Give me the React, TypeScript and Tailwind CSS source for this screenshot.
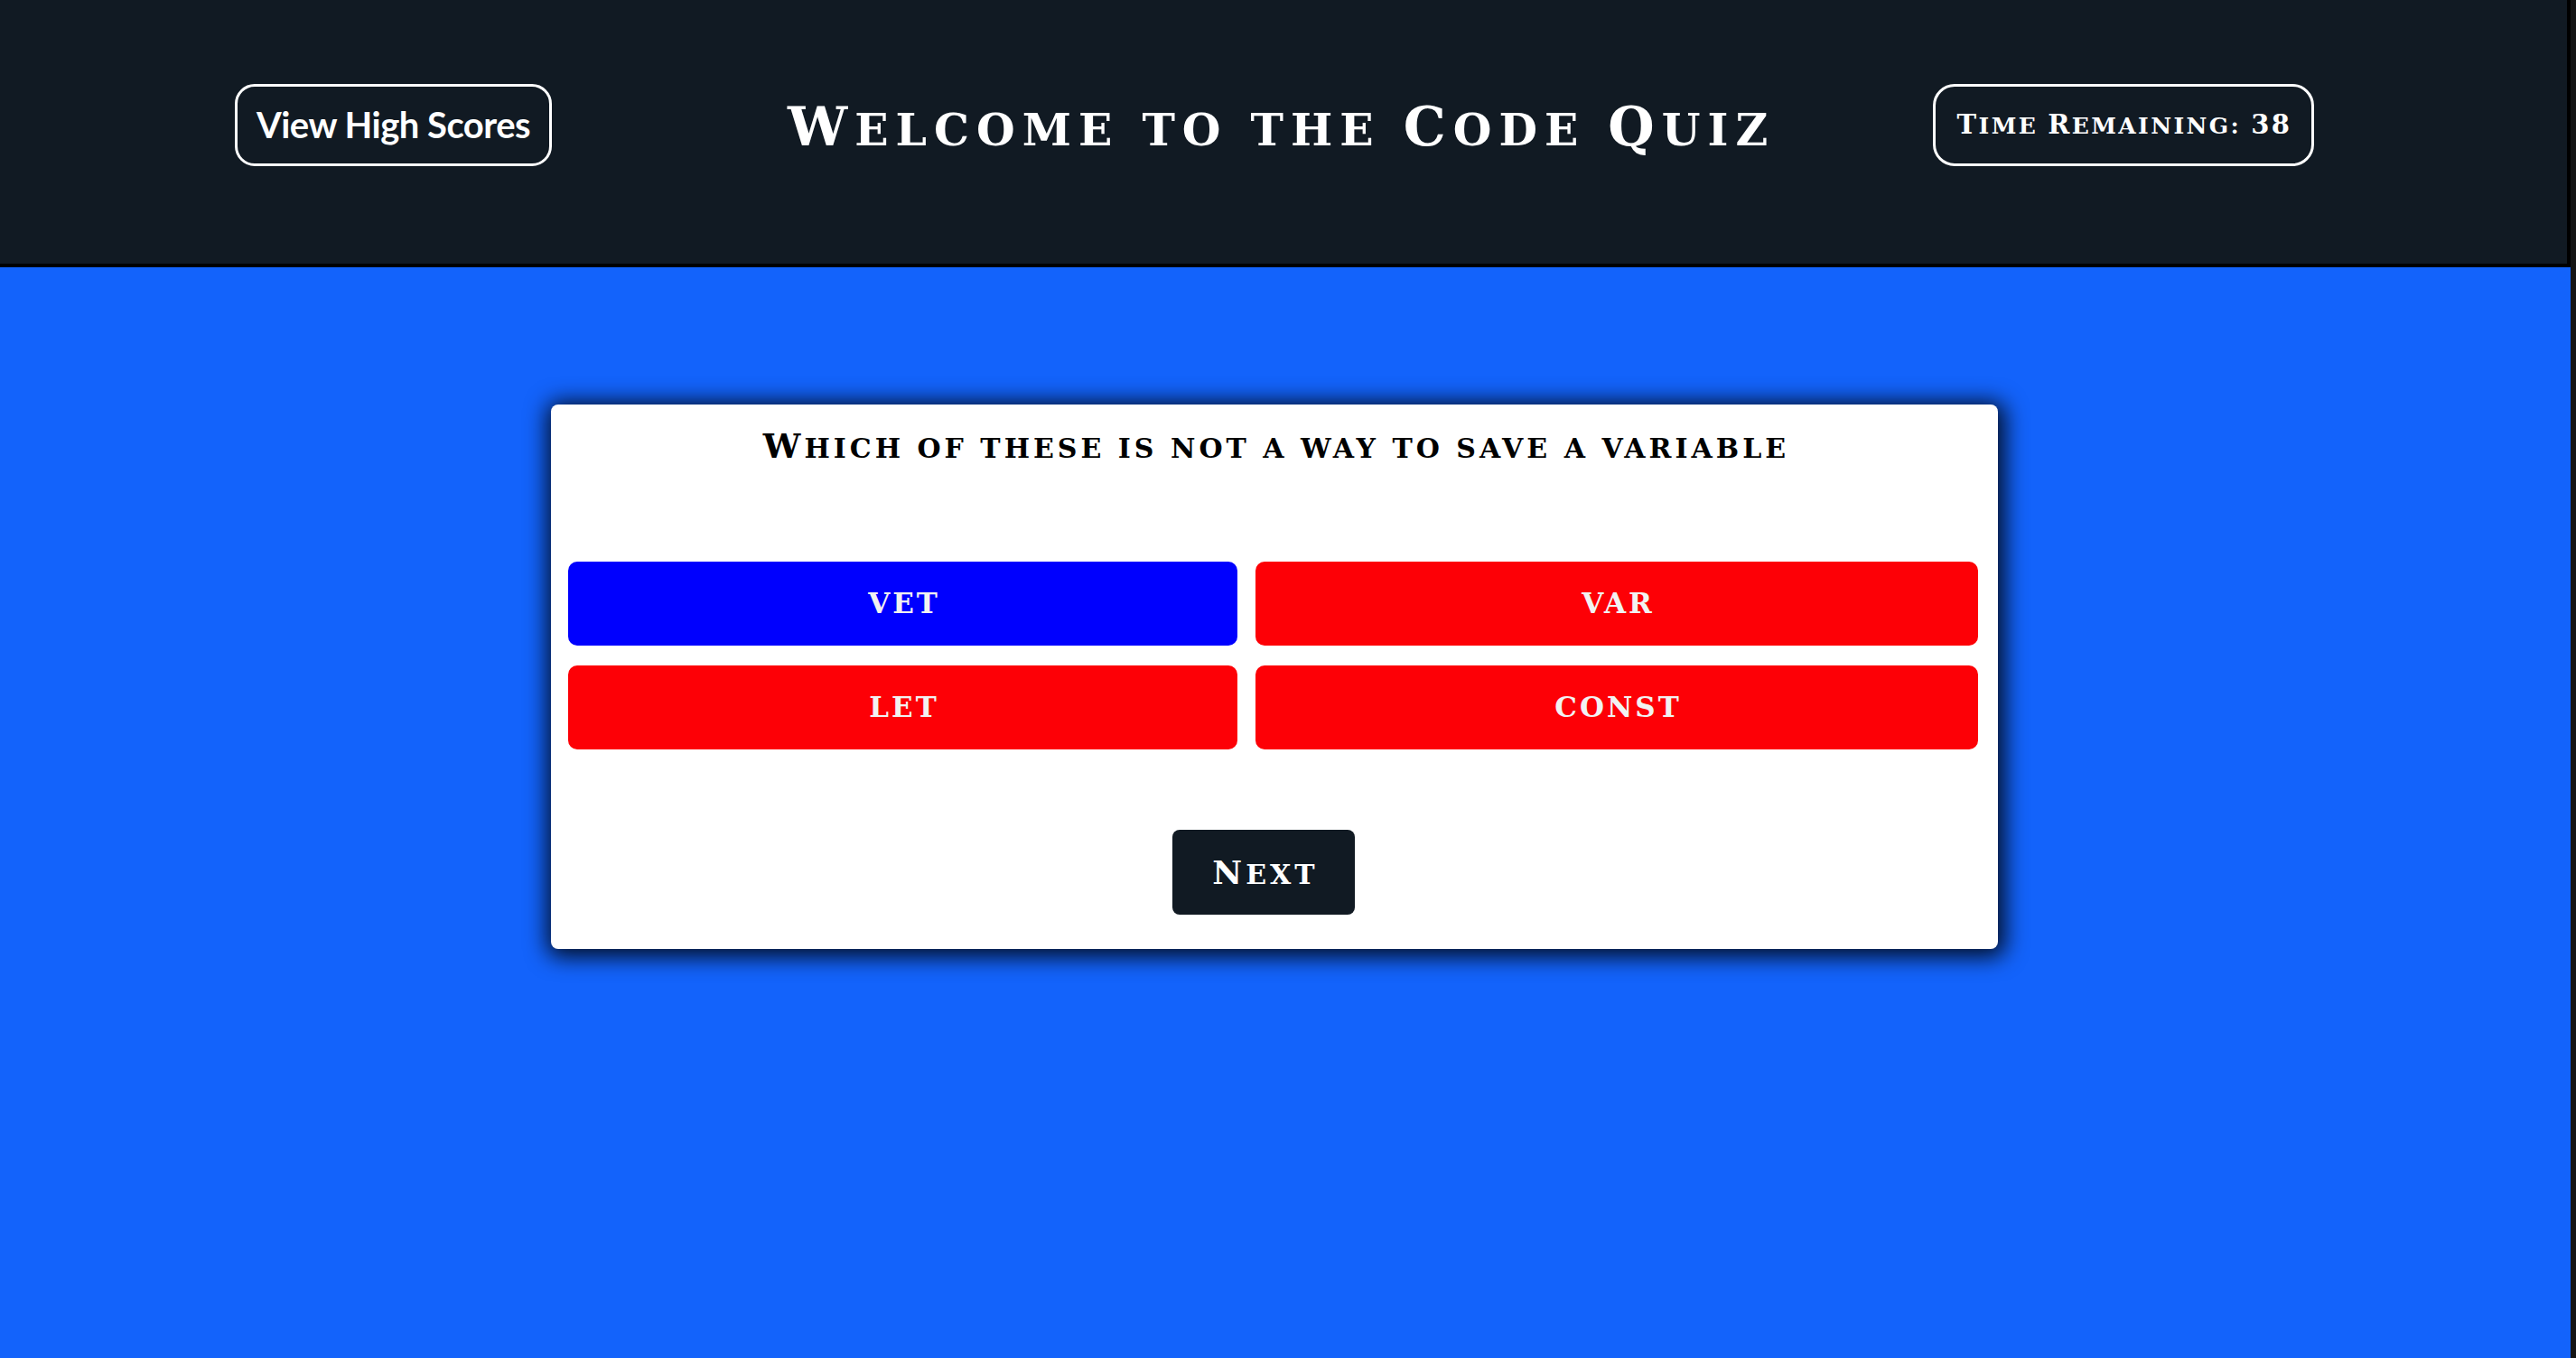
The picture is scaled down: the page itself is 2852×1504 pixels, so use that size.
import React from "react";

function SC({ text, big, small }: { text: string; big: string; small: string }) {
  const runs: { s: string; b: boolean }[] = [];
  for (const ch of text) {
    const b = /[A-Z0-9]/.test(ch);
    const last = runs[runs.length - 1];
    if (last && last.b === b) last.s += ch;
    else runs.push({ s: ch, b });
  }
  return (
    <span className="whitespace-pre">
      {runs.map((r, i) => (
        <span key={i} className={r.b ? big : small}>
          {r.s.toUpperCase()}
        </span>
      ))}
    </span>
  );
}

const answers = [
  { label: "vet", color: "bg-[#0000fe]" },
  { label: "var", color: "bg-[#fd0006]" },
  { label: "let", color: "bg-[#fd0006]" },
  { label: "const", color: "bg-[#fd0006]" },
];

export default function App() {
  return (
    <div className="flex h-[1504px] w-[2852px] overflow-hidden">
      <div className="flex w-[2846px] flex-col">
        <header className="flex h-[296px] w-[2846px] items-center border-b-4 border-r-4 border-black bg-[#111a23] pb-[16px] text-white">
          <div className="flex w-[864px] pl-[260px]">
            <button className="flex h-[91px] w-[351px] items-center justify-center rounded-[22px] border-[3px] border-white font-['Lato',sans-serif] text-[40px] font-bold tracking-[-0.5px] text-white">
              View High Scores
            </button>
          </div>
          <h1 className="w-[1093px] whitespace-nowrap pl-[8px] pt-[4px] text-center font-['DejaVu_Serif',serif] font-bold leading-none tracking-[8px]">
            <SC text="Welcome to the Code Quiz" big="text-[59px]" small="text-[49px]" />
          </h1>
          <div className="flex flex-1 pl-[183px]">
            <div className="flex h-[91px] w-[422px] items-center justify-center rounded-[24px] border-[3px] border-white pl-[2px] font-['DejaVu_Serif',serif] font-bold leading-none tracking-[2.4px] whitespace-nowrap">
              <SC text="Time Remaining: 38" big="text-[29px]" small="text-[25px]" />
            </div>
          </div>
        </header>
        <main className="flex-1 bg-[#1363fb] pl-[610px] pt-[152px]">
          <div className="flex w-[1602px] flex-col rounded-[8px] bg-white px-[19px] pb-[38px] pt-[24px] shadow-[2px_3px_24px_6px_rgba(0,0,0,0.85)]">
            <h2 className="h-[44px] whitespace-nowrap pl-[4px] text-center font-['DejaVu_Serif',serif] font-bold leading-[44px] tracking-[4px] text-black">
              <SC text="Which of these is not a way to save a variable" big="text-[37px]" small="text-[30px]" />
            </h2>
            <div className="mt-[106px] grid grid-cols-[741fr_800fr] gap-x-[20px] gap-y-[22px] pr-[3px]">
              {answers.map((a) => (
                <button
                  key={a.label}
                  className={`${a.color} flex h-[93px] items-center justify-center rounded-[10px] pl-[3px] font-['DejaVu_Serif',serif] text-[31px] font-bold uppercase tracking-[3px] text-[#f2f2f2]`}
                >
                  {a.label}
                </button>
              ))}
            </div>
            <div className="mt-[89px] flex justify-center">
              <button className="mr-[24px] flex h-[94px] w-[202px] items-center justify-center rounded-[8px] bg-[#111a23] pl-[4px] font-['DejaVu_Serif',serif] font-bold leading-none tracking-[4px] text-white">
                <SC text="Next" big="text-[36px]" small="text-[30px]" />
              </button>
            </div>
          </div>
        </main>
      </div>
      <div className="w-[6px] bg-[#141414]" />
    </div>
  );
}
